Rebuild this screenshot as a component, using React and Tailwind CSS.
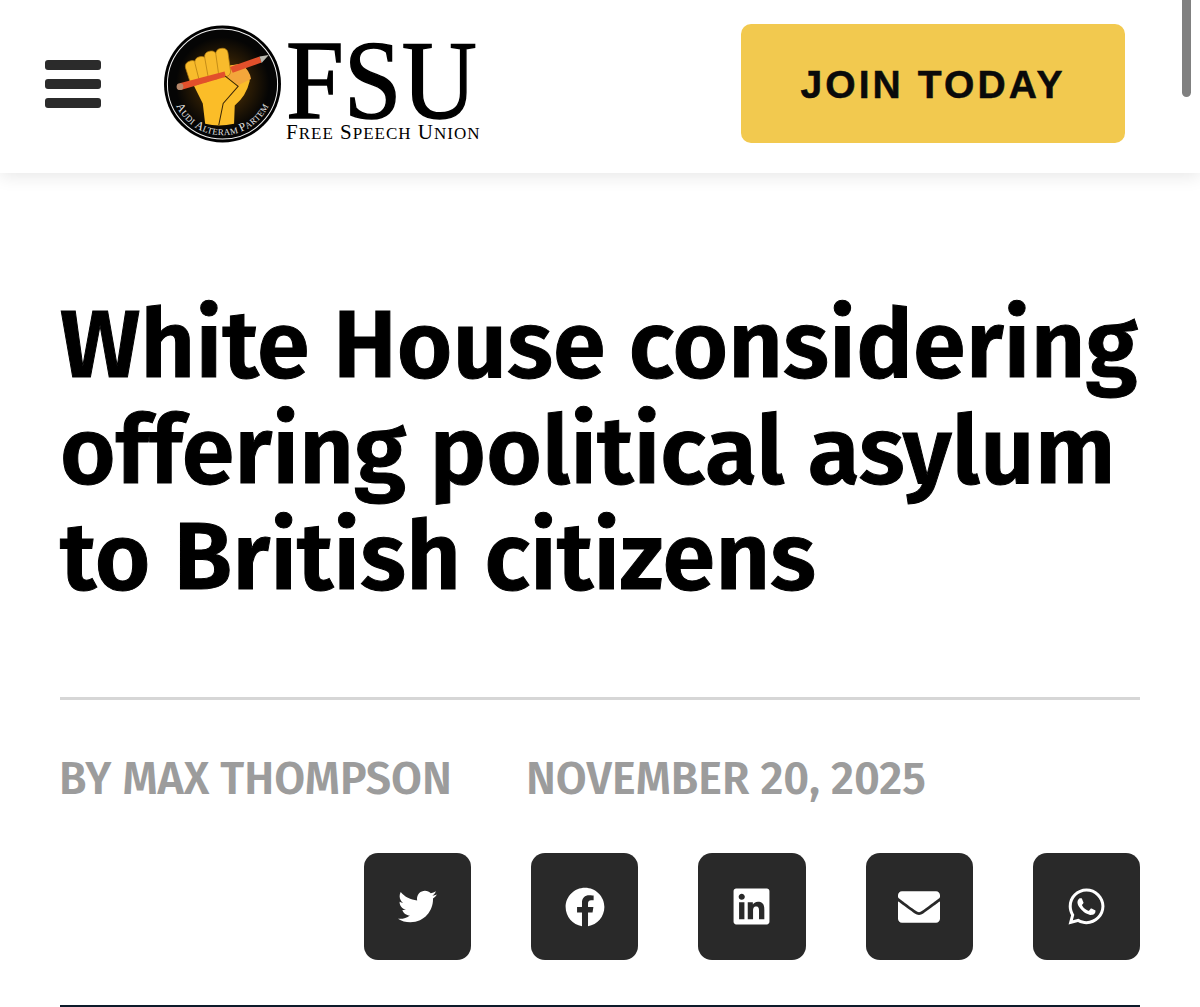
import React from "react";
import { FaTwitter, FaFacebook, FaLinkedin, FaEnvelope, FaWhatsapp } from "react-icons/fa";

function Seal() {
  return (
    <svg viewBox="44 33 344 344" className="w-[117px] h-[118px] shrink-0">
      <defs>
        <radialGradient id="glow" cx="50%" cy="50%" r="50%">
          <stop offset="0%" stopColor="#6a4408" />
          <stop offset="50%" stopColor="#2a1b05" />
          <stop offset="85%" stopColor="#050505" />
        </radialGradient>
        <path id="arc" d="M 70 240 A 150 150 0 0 0 362 240" fill="none" />
      </defs>
      <circle cx="216" cy="205" r="172" fill="#000" />
      <circle cx="216" cy="205" r="162" fill="url(#glow)" stroke="#f2f2f2" strokeWidth="3" />
      <path d="M165 322 L158 262 L122 190 L240 150 L272 146 Q296 165 296 196 Q286 240 252 268 L250 322 Q205 332 165 322 Z" fill="#fbbd28" />
      <path d="M205 326 L218 262 L268 206 L300 190 Q296 165 272 146 L244 150 L225 180 L262 208 L218 262 Z" fill="#f3a63b" />
      <g fill="#f8bb2c" stroke="#b07a10" strokeWidth="2">
        <rect x="113" y="136" width="36" height="72" rx="15" transform="rotate(-18 131 172)" />
        <rect x="140" y="124" width="36" height="76" rx="15" transform="rotate(-14 158 162)" />
        <rect x="168" y="108" width="36" height="84" rx="15" transform="rotate(-10 186 150)" />
        <rect x="200" y="100" width="36" height="84" rx="15" transform="rotate(-8 218 142)" />
      </g>
      <path d="M90 203 L222 168 L226 184 L96 222 Z" fill="#e2502b" />
      <path d="M238 155 L325 124 L331 142 L246 172 Z" fill="#e2502b" />
      <path d="M325 124 L352 120 L331 143 Z" fill="#b9b9b0" />
      <circle cx="91" cy="213" r="10" fill="#b5876a" />
      <path d="M205 326 L218 262 L262 212 L224 182" fill="none" stroke="#3a2606" strokeWidth="3" />
      <text fontFamily="'Liberation Serif', serif" fontSize="26" fill="#e8e8e8" letterSpacing="1">
        <textPath href="#arc" startOffset="50%" textAnchor="middle">
          <tspan fontSize="34">A</tspan>UDI <tspan fontSize="34">A</tspan>LTERAM <tspan fontSize="34">P</tspan>ARTEM
        </textPath>
      </text>
    </svg>
  );
}

function Logo() {
  return (
    <div className="flex items-center ml-[63px] w-[316px]">
      <Seal />
      <div className="ml-[5px] pt-[10px] flex flex-col font-['Liberation_Serif',serif] text-black">
        <div className="text-[113px] leading-[84px] h-[84px] whitespace-nowrap [-webkit-text-stroke:1.5px_black] scale-x-[0.92] origin-left pt-[4px]">FSU</div>
        <div className="text-[21px] leading-[20px] mt-[4px] whitespace-nowrap tracking-[1px]">
          F<span className="text-[17px]">REE</span> S<span className="text-[17px]">PEECH</span> U<span className="text-[17px]">NION</span>
        </div>
      </div>
    </div>
  );
}

const share = [
  [FaTwitter, "text-[39px]"],
  [FaFacebook, "text-[40px]"],
  [FaLinkedin, "text-[41px]"],
  [FaEnvelope, "text-[42px]"],
  [FaWhatsapp, "text-[41px]"],
];

export default function App() {
  return (
    <div className="relative w-[1200px] h-[1007px] overflow-hidden bg-white font-['Fira_Sans','Noto_Sans',sans-serif]">
      <header className="relative flex items-center h-[173px] pl-[45px] pr-[75px] pb-[6px] shadow-[0_4px_16px_rgba(0,0,0,0.09)]">
        <div className="flex flex-col gap-[9px] w-[56px]">
          <span className="h-[10px] rounded-[3px] bg-[#2b2b2b]" />
          <span className="h-[10px] rounded-[3px] bg-[#2b2b2b]" />
          <span className="h-[10px] rounded-[3px] bg-[#2b2b2b]" />
        </div>
        <Logo />
        <a className="ml-auto flex items-center justify-center w-[384px] h-[119px] pt-[4px] rounded-[10px] bg-[#f2c94f] font-['Liberation_Sans',sans-serif] font-bold text-[39px] tracking-[3.1px] text-[#0a0a0a] [-webkit-text-stroke:0.5px_#0a0a0a]">
          JOIN TODAY
        </a>
      </header>
      <div className="absolute top-0 left-[1182px] w-[9px] h-[97px] rounded-b-[5px] bg-[#808080]" />

      <main className="px-[60px]">
        <h1 className="mt-[119px] text-[95.4px] leading-[106px] font-semibold text-black [-webkit-text-stroke:1px_black] [font-variant-ligatures:none]">
          White House considering offering political asylum to British citizens
        </h1>
        <div className="mt-[87px] h-[3px] bg-[#d6d6d6]" />
        <div className="mt-[51px] flex gap-[74px] text-[44.8px] leading-[56px] font-semibold text-[#9c9c9c] -ml-[1px]">
          <span>BY MAX THOMPSON</span>
          <span>NOVEMBER 20, 2025</span>
        </div>
        <div className="mt-[46px] flex justify-end gap-[60px]">
          {share.map(([Icon, size], i) => (
            <a key={i} className={`flex items-center justify-center w-[107.25px] h-[107px] rounded-[14px] bg-[#292929] text-white ${size}`}>
              <Icon />
            </a>
          ))}
        </div>
        <div className="mt-[45px] h-[2px] bg-[#0d1b2a]" />
      </main>
    </div>
  );
}
